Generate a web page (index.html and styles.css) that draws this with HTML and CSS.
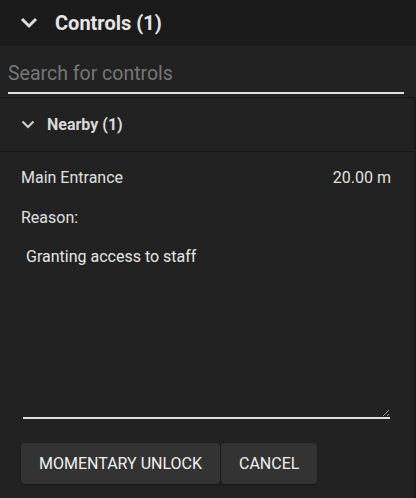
FILE: index.html
```html
<!DOCTYPE html>
<html>
<head>
<meta charset="utf-8">
<link rel="stylesheet" href="styles.css">
</head>
<body>
<div class="app">
  <div class="header">
    <svg class="chev-lg" viewBox="0 0 18 12" width="18" height="12"><path d="M2 2 L9 9 L16 2" fill="none" stroke="#ddd" stroke-width="3"/></svg>
    <span class="title">Controls (1)</span>
  </div>
  <div class="search">
    <input class="search-input" type="text" placeholder="Search for controls">
  </div>
  <div class="card">
    <div class="card-head">
      <svg class="chev-sm" viewBox="0 0 14 9" width="14" height="9"><path d="M1.5 1.5 L7 7 L12.5 1.5" fill="none" stroke="#ccc" stroke-width="2.2"/></svg>
      <span class="card-title">Nearby (1)</span>
    </div>
    <div class="card-body">
      <div class="row">
        <span>Main Entrance</span>
        <span>20.00 m</span>
      </div>
      <div class="label">Reason:</div>
      <textarea class="reason">Granting access to staff</textarea>
      <div class="actions">
        <button class="btn">MOMENTARY UNLOCK</button>
        <button class="btn">CANCEL</button>
      </div>
    </div>
  </div>
</div>
</body>
</html>
```
FILE: styles.css
```css
html, body {
  margin: 0;
  padding: 0;
  background: #222222;
  font-family: Roboto, "Liberation Sans", sans-serif;
  color: #e0e0e0;
}
.app {
  width: 416px;
  height: 498px;
  overflow: hidden;
  display: flex;
  flex-direction: column;
}
.header {
  height: 46px;
  flex: none;
  background: #1b1b1b;
  display: flex;
  align-items: center;
  padding-left: 20px;
  box-sizing: border-box;
}
.chev-lg { display: block; margin-right: 17px; margin-top: -1px; }
.title {
  font-weight: 700;
  font-size: 20px;
  color: #e6e6e6;
}
.search {
  height: 52px;
  flex: none;
  background: #222222;
  padding: 0 12px 0 8px;
  box-sizing: border-box;
  display: flex;
  align-items: flex-end;
  border-bottom: 1px solid #181818;
}
.search-input {
  width: 100%;
  height: 36px;
  box-sizing: border-box;
  background: transparent;
  border: none;
  border-bottom: 2px solid #e0e0e0;
  font-family: Roboto, "Liberation Sans", sans-serif;
  font-size: 19.5px;
  color: #ddd;
  padding: 0 0 4px 0;
  margin: 0 0 3px 0;
  outline: none;
}
.search-input::placeholder { color: #777; }
.card {
  flex: 1;
  background: #222222;
  border-right: 2px solid #1a1a1a;
  border-top-right-radius: 4px;
}
.card-head {
  height: 54px;
  display: flex;
  align-items: center;
  padding-left: 21px;
  border-bottom: 1px solid #161616;
  box-sizing: border-box;
}
.chev-sm { display: block; margin-right: 12px; }
.card-title {
  font-weight: 700;
  font-size: 16px;
  color: #d8d8d8;
}
.card-body {
  padding: 16px 23px 0 21px;
  font-size: 16px;
}
.row {
  display: flex;
  justify-content: space-between;
  color: #e0e0e0;
  line-height: 19px;
}
.label {
  margin-top: 21px;
  line-height: 19px;
}
.reason {
  display: block;
  margin: 12px 0 0 2px;
  width: 367px;
  height: 180px;
  box-sizing: border-box;
  background: transparent;
  border: none;
  border-bottom: 2px solid #e0e0e0;
  color: #e6e6e6;
  font-family: Roboto, "Liberation Sans", sans-serif;
  font-size: 16px;
  line-height: 19px;
  padding: 8px 3px;
  resize: vertical;
  outline: none;
}
.actions {
  display: flex;
  gap: 1px;
  margin-top: 24px;
}
.btn {
  background: #333333;
  color: #f0f0f0;
  border: none;
  border-radius: 4px;
  height: 41px;
  padding: 0 18px;
  font-family: Roboto, "Liberation Sans", sans-serif;
  font-size: 16px;
  box-shadow: 0 1px 2px rgba(0,0,0,0.4);
}
```
